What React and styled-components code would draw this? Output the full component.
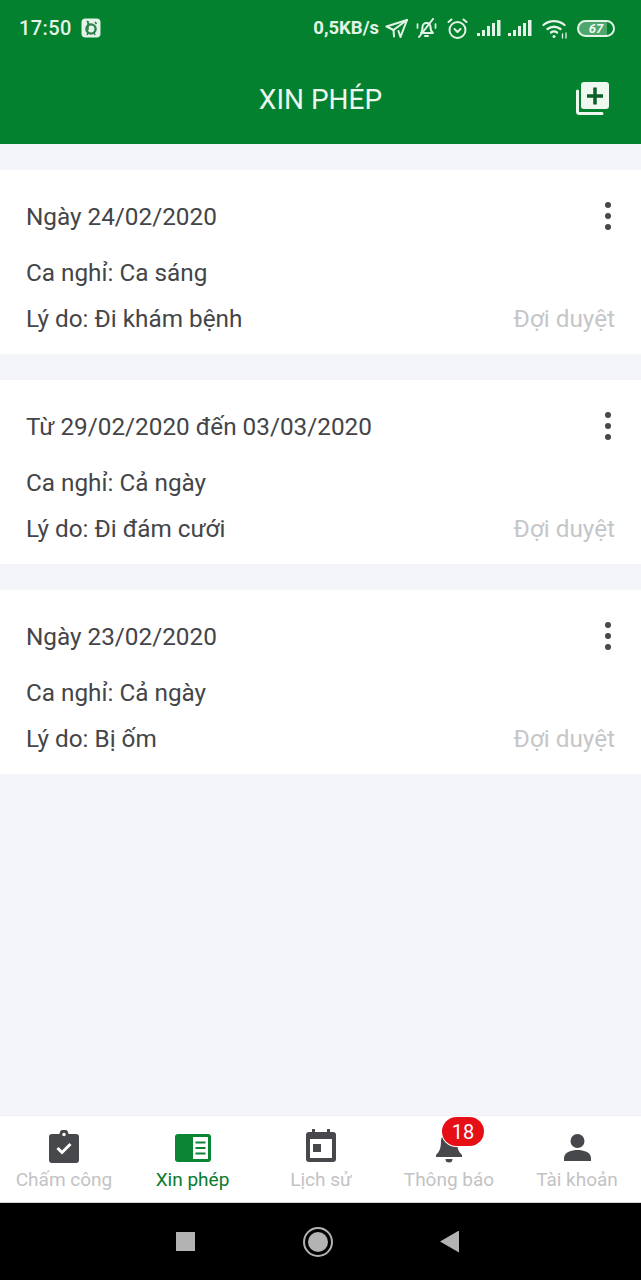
import React from "react";
import styled, { createGlobalStyle } from "styled-components";

const Global = createGlobalStyle`
  html, body { margin: 0; padding: 0; background: #f3f5f9; }
  * { box-sizing: border-box; }
`;

const Screen = styled.div`
  width: 641px;
  height: 1280px;
  display: flex;
  flex-direction: column;
  overflow: hidden;
  font-family: Roboto, "Noto Sans", sans-serif;
  background: #f3f5f9;
`;

const Top = styled.header`
  height: 144px;
  flex: none;
  background: #03812e;
  color: #fff;
  display: flex;
  flex-direction: column;
`;

const StatusBar = styled.div`
  height: 56px;
  padding: 0 26px 0 19px;
  display: flex;
  align-items: center;
  color: #e4f3e8;
`;

const Clock = styled.span`
  font-size: 20px;
  font-weight: 500;
  letter-spacing: 0.4px;
  margin-right: 9px;
`;

const StatusRight = styled.div`
  margin-left: auto;
  display: flex;
  align-items: center;
`;

const Speed = styled.span`
  font-size: 18.5px;
  font-weight: 700;
`;

const StatusSlot = styled.span`
  display: block;
  line-height: 0;
  margin-left: ${(p) => p.$gap}px;
`;

const BatteryBox = styled.div`
  width: 38px;
  height: 17px;
  margin-left: 9px;
  border: 2px solid #e4f3e8;
  border-radius: 9px;
  display: flex;
  align-items: center;
  justify-content: center;
  font-size: 13px;
  font-weight: 700;
  font-style: italic;
  background: linear-gradient(90deg, rgba(255, 255, 255, 0.3) 0 82%, transparent 82%);
  color: #f2faf4;
`;

const TitleRow = styled.div`
  flex: 1;
  position: relative;
  display: flex;
  align-items: center;
  justify-content: center;
  padding-bottom: 2px;
`;

const Title = styled.h1`
  margin: 0;
  font-size: 28px;
  font-weight: 400;
  color: #ecf7ef;
`;

const AddButton = styled.div`
  position: absolute;
  right: 32px;
  top: 26px;
  line-height: 0;
`;

const List = styled.main`
  flex: 1;
  padding-top: 26px;
  display: flex;
  flex-direction: column;
  gap: 26px;
`;

const Card = styled.article`
  height: 184px;
  background: #fff;
  padding: 28px 26px 0 26px;
`;

const CardRow = styled.div`
  display: flex;
  justify-content: space-between;
  align-items: center;
  height: 36px;
  margin-top: ${(p) => p.$gap || 0}px;
`;

const CardText = styled.span`
  font-size: 24.3px;
  color: #444548;
  white-space: nowrap;
`;

const Status = styled.span`
  font-size: 24.3px;
  color: #c5c6c8;
`;

const Dots = styled.div`
  width: 6px;
  margin: 0 4px 0 0;
  display: flex;
  flex-direction: column;
  align-items: center;
  gap: 5px;
  span {
    width: 6px;
    height: 6px;
    border-radius: 50%;
    background: #47484b;
  }
`;

const Nav = styled.nav`
  height: 88px;
  flex: none;
  background: #fff;
  border-top: 1px solid #eceef1;
  border-bottom: 1px solid #d4d4d4;
  display: grid;
  grid-template-columns: 128px 129px 128px 128px 128px;
`;

const NavItem = styled.div`
  position: relative;
  display: flex;
  flex-direction: column;
  align-items: center;
  padding-top: 12px;
  color: ${(p) => (p.$active ? "#0a7a30" : "#c2c3c5")};
`;

const NavIcon = styled.div`
  height: 35px;
  display: flex;
  align-items: flex-end;
  line-height: 0;
`;

const NavLabel = styled.span`
  font-size: 19px;
  line-height: 24px;
  white-space: nowrap;
  margin-top: 5px;
`;

const Badge = styled.span`
  position: absolute;
  top: 1px;
  left: 57px;
  width: 42px;
  height: 29px;
  border-radius: 15px;
  background: #e60f16;
  color: #fff;
  font-size: 20px;
  display: flex;
  align-items: center;
  justify-content: center;
  box-shadow: 0 0 0 1px #fff;
`;

const SystemBar = styled.div`
  height: 77px;
  flex: none;
  background: #000;
  display: flex;
  align-items: center;
  justify-content: center;
  gap: 107px;
  padding-right: 6px;
`;

const SysSquare = styled.div`
  width: 19px;
  height: 19px;
  background: #b3b3b3;
`;

const SysCircle = styled.div`
  width: 30px;
  height: 30px;
  margin-left: 1px;
  border-radius: 50%;
  border: 2px solid #b3b3b3;
  display: flex;
  align-items: center;
  justify-content: center;
  &::after {
    content: "";
    width: 20px;
    height: 20px;
    border-radius: 50%;
    background: #b3b3b3;
  }
`;

const SysBack = styled.div`
  width: 19px;
  height: 22px;
  background: #b3b3b3;
  clip-path: polygon(0 50%, 100% 0, 100% 100%);
`;

const ink = "#e4f3e8";

const AppBadgeIcon = () => (
  <svg width="20" height="20" viewBox="0 0 20 20">
    <rect x="0.5" y="0.5" width="19" height="19" rx="4" fill={ink} />
    <circle cx="10" cy="11" r="4.600" fill="none" stroke="#2f7f4a" strokeWidth="2.400" />
    <path d="M6 3l2 3M7 3v9M14 4l1.500 2M6 17l1-2M14 17l-1-2" stroke="#2f7f4a" strokeWidth="1.600" fill="none" />
  </svg>
);

const SendIcon = () => (
  <svg width="23" height="19" viewBox="0 0 23 19" fill="none" stroke={ink} strokeWidth="2" strokeLinejoin="round" strokeLinecap="round">
    <path d="M22 1L1.500 7.500 8.500 11" />
    <path d="M22 1L8.500 11 9 17.500" />
    <path d="M22 1L15.500 18 13.500 12" />
  </svg>
);

const MutedBellIcon = () => (
  <svg width="21" height="21" viewBox="0 0 21 21" fill="none" stroke={ink} strokeWidth="2" strokeLinecap="round" strokeLinejoin="round">
    <path d="M5 15c1.500-1.500 1.500-3.500 1.500-6a4 4 0 0 1 8 0c0 2.500.5 4.500 2.500 6z" />
    <path d="M9 18h3M3 19L17 1" />
    <path d="M1.500 6v4M19.500 6v4" strokeWidth="1.700" />
  </svg>
);

const AlarmIcon = () => (
  <svg width="21" height="21" viewBox="0 0 21 21" fill="none" stroke={ink} strokeWidth="2" strokeLinecap="round" strokeLinejoin="round">
    <circle cx="10.500" cy="12" r="8" />
    <path d="M1.500 4L4.500 1.500M19.500 4L16.500 1.500M7.500 11l3 3 3-3" />
  </svg>
);

const SignalIcon = () => (
  <svg width="24" height="16" viewBox="0 0 24 16" fill={ink}>
    <rect x="0" y="13" width="3" height="3" />
    <rect x="5" y="10" width="3" height="6" />
    <rect x="10" y="6" width="3" height="10" />
    <rect x="15" y="3" width="3" height="13" />
    <rect x="20" y="0" width="3.500" height="16" />
  </svg>
);

const WifiIcon = () => (
  <svg width="26" height="21" viewBox="0 0 26 21" fill="none" stroke={ink} strokeWidth="2.300" strokeLinecap="round">
    <path d="M1.500 7a16 16 0 0 1 21 0M5.500 11a10.500 10.500 0 0 1 13 0M9 14.500a5 5 0 0 1 6 0" />
    <circle cx="12" cy="18.500" r="1.500" fill={ink} stroke="none" />
    <path d="M20.500 16v4M24 15v5" strokeWidth="1.300" />
  </svg>
);

const AddStackIcon = () => (
  <svg width="33" height="33" viewBox="0 0 33 33">
    <path d="M1.500 9v20.500a2 2 0 0 0 2 2H26" fill="none" stroke="#eef8f1" strokeWidth="3" strokeLinecap="round" />
    <rect x="5" y="0" width="28" height="27" rx="3" fill="#eef8f1" />
    <path d="M19 5.500v17M11 14h16" stroke="#0a5f28" strokeWidth="3.500" />
  </svg>
);

const ClipboardIcon = () => (
  <svg width="30" height="33" viewBox="0 0 30 33">
    <path d="M3 4h7.500a4.500 4.500 0 0 1 9 0H27a3 3 0 0 1 3 3v23a3 3 0 0 1-3 3H3a3 3 0 0 1-3-3V7a3 3 0 0 1 3-3z" fill="#47484b" />
    <circle cx="15" cy="4.500" r="1.700" fill="#fff" />
    <path d="M8.500 18l4.500 4.500 8.500-8.500" fill="none" stroke="#fff" strokeWidth="3" />
  </svg>
);

const LeaveIcon = () => (
  <svg width="36" height="29" viewBox="0 0 36 29">
    <rect width="36" height="28" rx="3" fill="#0b8534" />
    <rect x="18" y="3" width="15" height="22" fill="#fff" />
    <path d="M20.500 8.500h10M20.500 14h10M20.500 19.500h10" stroke="#0b8534" strokeWidth="2.200" />
  </svg>
);

const CalendarIcon = () => (
  <svg width="30" height="34" viewBox="0 0 30 34">
    <path d="M6 0h3v3h12V0h3v3h3a3 3 0 0 1 3 3v24a3 3 0 0 1-3 3H3a3 3 0 0 1-3-3V6a3 3 0 0 1 3-3h3z" fill="#47484b" />
    <rect x="4" y="10" width="22" height="19" fill="#fff" />
    <rect x="7" y="15" width="8" height="8" fill="#47484b" />
  </svg>
);

const BellIcon = () => (
  <svg width="26" height="30" viewBox="0 0 26 30">
    <path d="M13 0a8 8 0 0 1 8 8c0 8 2 11 5 14v2H0v-2c3-3 5-6 5-14a8 8 0 0 1 8-8z" fill="#47484b" />
    <path d="M9.500 26h7a3.500 3.500 0 0 1-7 0z" fill="#47484b" />
  </svg>
);

const PersonIcon = () => (
  <svg width="27" height="29" viewBox="0 0 27 29" fill="#47484b">
    <circle cx="13.500" cy="7" r="7" />
    <path d="M0 27v-3c0-6 8-8 13.500-8S27 18 27 24v3z" />
  </svg>
);

const requests = [
  { when: "Ngày 24/02/2020", shift: "Ca nghỉ: Ca sáng", reason: "Lý do: Đi khám bệnh" },
  { when: "Từ 29/02/2020 đến 03/03/2020", shift: "Ca nghỉ: Cả ngày", reason: "Lý do: Đi đám cưới" },
  { when: "Ngày 23/02/2020", shift: "Ca nghỉ: Cả ngày", reason: "Lý do: Bị ốm" },
];

const tabs = [
  { label: "Chấm công", icon: <ClipboardIcon /> },
  { label: "Xin phép", icon: <LeaveIcon />, active: true },
  { label: "Lịch sử", icon: <CalendarIcon /> },
  { label: "Thông báo", icon: <BellIcon />, badge: 18 },
  { label: "Tài khoản", icon: <PersonIcon /> },
];

export default function App() {
  return (
    <Screen>
      <Global />
      <Top>
        <StatusBar>
          <Clock>17:50</Clock>
          <AppBadgeIcon />
          <StatusRight>
            <Speed>0,5KB/s</Speed>
            <StatusSlot $gap={6}><SendIcon /></StatusSlot>
            <StatusSlot $gap={8}><MutedBellIcon /></StatusSlot>
            <StatusSlot $gap={10}><AlarmIcon /></StatusSlot>
            <StatusSlot $gap={9}><SignalIcon /></StatusSlot>
            <StatusSlot $gap={7}><SignalIcon /></StatusSlot>
            <StatusSlot $gap={10}><WifiIcon /></StatusSlot>
            <BatteryBox>67</BatteryBox>
          </StatusRight>
        </StatusBar>
        <TitleRow>
          <Title>XIN PHÉP</Title>
          <AddButton>
            <AddStackIcon />
          </AddButton>
        </TitleRow>
      </Top>
      <List>
        {requests.map((r) => (
          <Card key={r.when + r.reason}>
            <CardRow>
              <CardText>{r.when}</CardText>
              <Dots>
                <span />
                <span />
                <span />
              </Dots>
            </CardRow>
            <CardRow $gap={20}>
              <CardText>{r.shift}</CardText>
            </CardRow>
            <CardRow $gap={10}>
              <CardText>{r.reason}</CardText>
              <Status>Đợi duyệt</Status>
            </CardRow>
          </Card>
        ))}
      </List>
      <Nav>
        {tabs.map((t) => (
          <NavItem key={t.label} $active={t.active}>
            <NavIcon>{t.icon}</NavIcon>
            <NavLabel>{t.label}</NavLabel>
            {t.badge && <Badge>{t.badge}</Badge>}
          </NavItem>
        ))}
      </Nav>
      <SystemBar>
        <SysSquare />
        <SysCircle />
        <SysBack />
      </SystemBar>
    </Screen>
  );
}
